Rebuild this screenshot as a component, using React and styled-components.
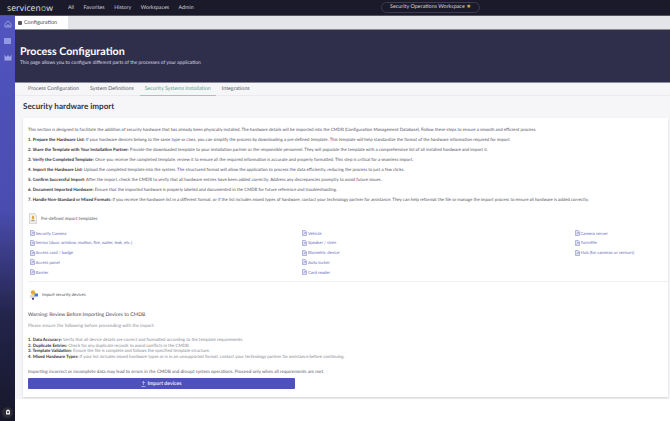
import styled, { createGlobalStyle } from "styled-components";

const GlobalStyle = createGlobalStyle`
  html, body { margin: 0; padding: 0; background: #fff; }
  body { font-family: Lato, "Noto Sans", sans-serif; text-rendering: geometricPrecision; }
`;

const navItems = ["All", "Favorites", "History", "Workspaces", "Admin"];
const contentTabs = ["Process Configuration", "System Definitions", "Security Systems Installation", "Integrations"];
const steps = [
  ["1. Prepare the Hardware List:", " If your hardware devices belong to the same type or class, you can simplify the process by downloading a pre-defined template. This template will help standardize the format of the hardware information required for import."],
  ["2. Share the Template with Your Installation Partner:", " Provide the downloaded template to your installation partner or the responsible personnel. They will populate the template with a comprehensive list of all installed hardware and import it."],
  ["3. Verify the Completed Template:", " Once you receive the completed template, review it to ensure all the required information is accurate and properly formatted. This step is critical for a seamless import."],
  ["4. Import the Hardware List:", " Upload the completed template into the system. The structured format will allow the application to process the data efficiently, reducing the process to just a few clicks."],
  ["5. Confirm Successful Import:", " After the import, check the CMDB to verify that all hardware entries have been added correctly. Address any discrepancies promptly to avoid future issues."],
  ["6. Document Imported Hardware:", " Ensure that the imported hardware is properly labeled and documented in the CMDB for future reference and troubleshooting."],
  ["7. Handle Non-Standard or Mixed Formats:", " If you receive the hardware list in a different format, or if the list includes mixed types of hardware, contact your technology partner for assistance. They can help reformat the file or manage the import process to ensure all hardware is added correctly."],
];
const templates = [
  ["Security Camera", "Sensor (door, window, motion, fire, water, leak, etc.)", "Access card / badge", "Access panel", "Barrier"],
  ["Vehicle", "Speaker / siren", "Biometric device", "Auto locker", "Card reader"],
  ["Camera server", "Turnstile", "Hub (for cameras or sensors)"],
];
const checks = [
  ["1. Data Accuracy:", " Verify that all device details are correct and formatted according to the template requirements."],
  ["2. Duplicate Entries:", " Check for any duplicate records to avoid conflicts in the CMDB."],
  ["3. Template Validation:", " Ensure the file is complete and follows the specified template structure."],
  ["4. Mixed Hardware Types:", " If your list includes mixed hardware types or is in an unsupported format, contact your technology partner for assistance before continuing."],
];

const FileIcon = () => (
  <svg width="5" height="6" viewBox="0 0 10 12" fill="none" stroke="#8a8dd0" strokeWidth="1.2">
    <path d="M1 1h5.5L9 3.5V11H1z" fill="#e3e4f5" />
    <path d="M3 8l4-3M5 5h2v2" />
  </svg>
);

const App = () => (
  <Page>
    <GlobalStyle />
    <TopBar>
      <Logo>
        servicen<LogoO>o</LogoO>w
      </Logo>
      <Nav>
        {navItems.map((item) => (
          <NavItem key={item}>{item}</NavItem>
        ))}
      </Nav>
      <WorkspacePill>
        Security Operations Workspace <Star>★</Star>
      </WorkspacePill>
    </TopBar>
    <Main>
      <SideBar>
        <SideIcons>
          <svg width="8" height="8" viewBox="0 0 16 16" fill="none" stroke="#aeb0ec" strokeWidth="1.5">
            <path d="M2 7.5L8 2l6 5.5V14H2zM6 14v-4h4v4" />
          </svg>
          <svg width="7" height="6" viewBox="0 0 14 12" fill="#9598e4">
            <rect width="14" height="12" rx="1" />
          </svg>
          <svg width="8" height="8" viewBox="0 0 16 16" fill="#9fa2ea">
            <path d="M1 15V3l3.5 5L8 4l3.5 4L15 3v12z" />
          </svg>
        </SideIcons>
        <Avatar>
          <svg width="6" height="6" viewBox="0 0 12 12" fill="#e8e8ee">
            <path d="M2 11V5a4 4 0 0 1 8 0v6z" />
            <rect x="4" y="5" width="4" height="3" fill="#333" />
          </svg>
        </Avatar>
      </SideBar>
      <Workspace>
        <TabStrip>
          <ActiveTab>
            <TabGlyph />
            Configuration
          </ActiveTab>
        </TabStrip>
        <Hero>
          <HeroTitle>Process Configuration</HeroTitle>
          <HeroDesc>This page allows you to configure different parts of the processes of your application</HeroDesc>
        </Hero>
        <ContentTabs>
          {contentTabs.map((tab, i) => (
            <ContentTab key={tab} $active={i === 2}>
              {tab}
            </ContentTab>
          ))}
        </ContentTabs>
        <Content>
          <SectionTitle>Security hardware import</SectionTitle>
          <Card>
            <Paragraph>
              This section is designed to facilitate the addition of security hardware that has already been physically installed. The hardware details will be imported into the CMDB (Configuration Management Database). Follow these steps to ensure a smooth and efficient process:
            </Paragraph>
            {steps.map(([label, text]) => (
              <Paragraph key={label}>
                <strong>{label}</strong>
                {text}
              </Paragraph>
            ))}
            <BlockHeader>
              <svg width="8" height="11" viewBox="0 0 9 12">
                <path d="M.5.5h6L8.5 3v8.5H.5z" fill="#f3f1e8" stroke="#b5b5b5" strokeWidth=".6" />
                <rect x="3.5" y="3" width="2" height="4" fill="#d9a32e" />
                <rect x="2.5" y="8" width="4" height="1" fill="#8b8b8b" />
              </svg>
              Pre-defined import templates
            </BlockHeader>
            <TemplateGrid>
              {templates.map((column, i) => (
                <TemplateColumn key={i}>
                  {column.map((name) => (
                    <TemplateLink key={name}>
                      <FileIcon />
                      {name}
                    </TemplateLink>
                  ))}
                </TemplateColumn>
              ))}
            </TemplateGrid>
            <Divider />
            <ImportHeader>
              <svg width="10" height="10" viewBox="0 0 10 10">
                <circle cx="4" cy="2.5" r="2.2" fill="#e4ad2e" />
                <rect x="1" y="5" width="5" height="3" fill="#d8d8de" />
                <rect x="5.5" y="3.5" width="3.5" height="3" fill="#3f7fbf" />
                <circle cx="4" cy="8.8" r="1.1" fill="#3d3592" />
              </svg>
              Import security devices
            </ImportHeader>
            <WarningTitle>Warning: Review Before Importing Devices to CMDB</WarningTitle>
            <Muted>Please ensure the following before proceeding with the import:</Muted>
            <CheckList>
              {checks.map(([label, text]) => (
                <div key={label}>
                  <strong>{label}</strong>
                  {text}
                </div>
              ))}
            </CheckList>
            <Notice>Importing incorrect or incomplete data may lead to errors in the CMDB and disrupt system operations. Proceed only when all requirements are met.</Notice>
            <ImportButton>
              <svg width="5" height="6" viewBox="0 0 10 12" fill="none" stroke="#dfe0f7" strokeWidth="1.2">
                <path d="M5 8V1M2 4l3-3 3 3M1 11h8" />
              </svg>
              Import devices
            </ImportButton>
          </Card>
        </Content>
      </Workspace>
    </Main>
  </Page>
);

export default App;

const Page = styled.div`
  width: 670px;
  height: 421px;
  overflow: hidden;
  display: flex;
  flex-direction: column;
  color: #3c3c46;
`;
const TopBar = styled.div`
  height: 15px;
  flex: none;
  background: #1a1a2a;
  border-bottom: 1px solid #55555f;
  display: flex;
  align-items: center;
  position: relative;
`;
const Logo = styled.div`
  margin-left: 7px;
  width: 61px;
  font-family: "Open Sans", sans-serif;
  font-size: 8.6px;
  letter-spacing: 0.1px;
  color: #e4e4e8;
`;
const LogoO = styled.span`
  color: #7fc68f;
`;
const Nav = styled.div`
  display: flex;
  gap: 9.5px;
`;
const NavItem = styled.div`
  font-size: 5.3px;
  color: #d0d0d8;
`;
const WorkspacePill = styled.div`
  position: absolute;
  left: 381px;
  top: 2px;
  width: 99px;
  height: 11px;
  box-sizing: border-box;
  border: 1px solid #3c3c4e;
  border-radius: 6px;
  font-size: 5.4px;
  line-height: 9px;
  color: #d8d8de;
  text-align: center;
  white-space: nowrap;
`;
const Star = styled.span`
  color: #e6c25a;
`;
const Main = styled.div`
  flex: 1;
  display: flex;
  min-height: 0;
`;
const SideBar = styled.div`
  width: 15px;
  flex: none;
  background: linear-gradient(180deg, #5254c0 0%, #4a4cb0 48%, #23244a 74%, #17172a 100%);
  display: flex;
  flex-direction: column;
  justify-content: space-between;
  align-items: center;
  padding: 4px 0 3.5px;
  box-sizing: border-box;
`;
const SideIcons = styled.div`
  display: flex;
  flex-direction: column;
  align-items: center;
  gap: 9.5px;
`;
const Avatar = styled.div`
  width: 11px;
  height: 11px;
  border-radius: 50%;
  background: #2b2b33;
  display: flex;
  align-items: center;
  justify-content: center;
`;
const Workspace = styled.div`
  flex: 1;
  min-width: 0;
  display: flex;
  flex-direction: column;
`;
const TabStrip = styled.div`
  height: 13px;
  flex: none;
  background: #e4e5e9;
  border-bottom: 1px solid #8b8b93;
  display: flex;
`;
const ActiveTab = styled.div`
  width: 53px;
  height: 13px;
  background: #fff;
  display: flex;
  align-items: center;
  gap: 2px;
  padding-left: 3px;
  box-sizing: border-box;
  font-size: 5.5px;
  color: #4a4a52;
`;
const TabGlyph = styled.span`
  width: 4px;
  height: 4px;
  background: #55555f;
  border-radius: 1px;
`;
const Hero = styled.div`
  height: 53px;
  flex: none;
  background: #2f2f4c;
  border-bottom: 1px solid #8b8b97;
  padding: 15px 0 0 5px;
  box-sizing: border-box;
  color: #fff;
`;
const HeroTitle = styled.div`
  font-size: 10.7px;
  font-weight: 700;
  line-height: 13px;
`;
const HeroDesc = styled.div`
  font-size: 4.93px;
  line-height: 7px;
  margin-top: 1.5px;
  color: #dcdce4;
`;
const ContentTabs = styled.div`
  height: 12px;
  flex: none;
  display: flex;
  padding-left: 8px;
  gap: 1px;
  background: #f6f6f8;
  border-bottom: 1px solid #ebebee;
`;
const ContentTab = styled.div`
  font-size: 5.3px;
  line-height: 12px;
  height: 12px;
  padding: 0 5px;
  color: ${({ $active }) => ($active ? "#5aa58d" : "#5a5a64")};
  border-bottom: 1px solid ${({ $active }) => ($active ? "#8fd0b8" : "transparent")};
`;
const Content = styled.div`
  flex: none;
  background: #f6f6f8;
  padding: 0 0 2px 8px;
`;
const SectionTitle = styled.div`
  font-size: 8.1px;
  font-weight: 700;
  line-height: 10px;
  margin-bottom: 7px;
  padding-top: 5px;
  color: #33333d;
`;
const Card = styled.div`
  width: 645px;
  background: #fff;
  padding: 9px 0 8px 5px;
  box-sizing: border-box;
  box-shadow: 0 1px 2px rgba(0, 0, 0, 0.15);
  font-size: 4.39px;
  color: #55555f;
  white-space: nowrap;
  strong {
    font-weight: 700;
    color: #33333d;
  }
`;
const Paragraph = styled.div`
  line-height: 5px;
  margin-bottom: 5px;
`;
const BlockHeader = styled.div`
  display: flex;
  align-items: center;
  gap: 4px;
  height: 12px;
  margin-top: 10px;
  padding-left: 1px;
  font-size: 4.4px;
`;
const TemplateGrid = styled.div`
  display: grid;
  grid-template-columns: 272.5px 272.5px 1fr;
  margin-top: 6px;
  padding-left: 1.5px;
`;
const TemplateColumn = styled.div`
  display: flex;
  flex-direction: column;
  gap: 3.8px;
`;
const TemplateLink = styled.div`
  display: flex;
  align-items: center;
  gap: 1px;
  height: 6px;
  color: #6d70c0;
  font-size: 4.3px;
`;
const Divider = styled.div`
  height: 1px;
  background: #f0f0f2;
  margin-top: 6.3px;
`;
const ImportHeader = styled.div`
  display: flex;
  align-items: center;
  gap: 3px;
  height: 12px;
  margin-top: 6.5px;
  padding-left: 1px;
  font-size: 4.3px;
`;
const WarningTitle = styled.div`
  font-size: 5.05px;
  line-height: 6px;
  margin-top: 11px;
  color: #44444e;
`;
const Muted = styled.div`
  font-size: 4.6px;
  line-height: 5px;
  margin-top: 5px;
  color: #8a8a94;
`;
const CheckList = styled.div`
  line-height: 5.6px;
  margin-top: 9px;
  color: #8a8a94;
`;
const Notice = styled.div`
  font-size: 4.6px;
  line-height: 5px;
  margin-top: 10px;
`;
const ImportButton = styled.div`
  width: 267px;
  height: 11px;
  margin-top: 4px;
  background: #4f51ba;
  border-radius: 1px;
  color: #e6e6f8;
  font-size: 5.2px;
  font-weight: 700;
  display: flex;
  align-items: center;
  justify-content: center;
  gap: 1px;
`;
